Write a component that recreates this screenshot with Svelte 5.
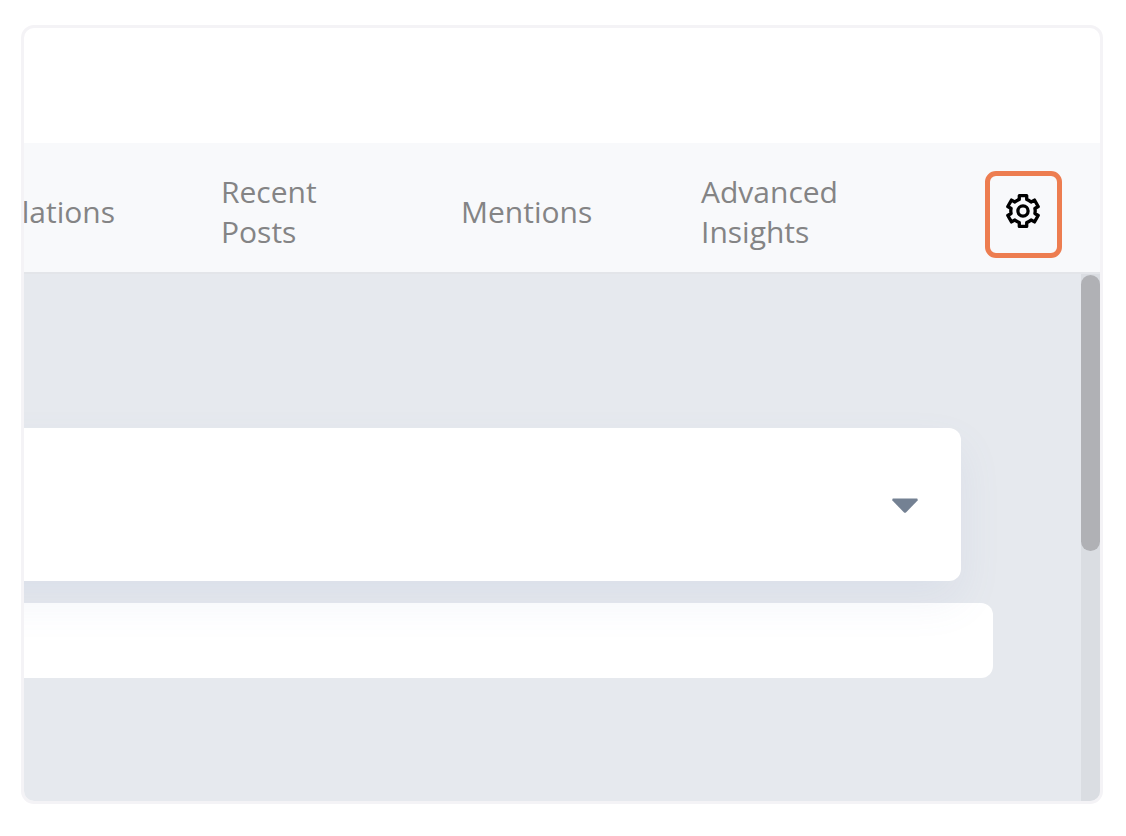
<script lang="ts">
	const tabs = ['lations', 'Recent Posts', 'Mentions', 'Advanced Insights'];

	let scrollShare = $state(52.4);
</script>

<div class="panel">
	<header class="topbar"></header>

	<nav class="tabs">
		{#each tabs as tab, i}
			<a href="#tab-{i}" class="tab" class:tab-cut={i === 0}>{tab}</a>
		{/each}
		<button class="settings" aria-label="Settings">
			<svg width="36" height="36" viewBox="-18 -18 36 36" fill="none" aria-hidden="true">
				<path
					d="M-3.7-11.6V-15.4H3.7V-11.6Q6-10.8 8.1-9L11.5-10.9L15.2-4.5L11.9-2.5Q12.5 0 11.9 2.5L15.2 4.5L11.5 10.9L8.1 9Q6 10.8 3.7 11.6V15.4H-3.7V11.6Q-6 10.8-8.1 9L-11.5 10.9L-15.2 4.5L-11.9 2.5Q-12.5 0-11.9-2.5L-15.2-4.5L-11.5-10.9L-8.1-9Q-6-10.8-3.7-11.6Z"
					stroke="#000"
					stroke-width="3.3"
					stroke-linejoin="round"
				/>
				<circle r="5.1" stroke="#000" stroke-width="3.3" />
			</svg>
		</button>
	</nav>

	<div class="body">
		<main class="content">
			<button class="card dropdown" aria-label="Expand">
				<svg width="26" height="16" viewBox="0 0 26 16" aria-hidden="true">
					<path d="M1.2 0.5H24.8Q26 0.5 25.6 2.6L14.2 14.2Q13 15.4 11.8 14.2L0.4 2.6Q0 0.5 1.2 0.5Z" fill="#748193" />
				</svg>
			</button>
			<div class="card row"></div>
		</main>
		<div class="scroll-track">
			<div class="scroll-thumb" style="height: {scrollShare}%"></div>
		</div>
	</div>
</div>

<style>
	:global(body) {
		margin: 0;
		background: #fff;
	}
	.panel {
		margin: 25px 23px 32px 21px;
		border: 3px solid #f4f3f6;
		border-radius: 13px;
		overflow: hidden;
		background: #fff;
		font-family: 'Open Sans', 'Noto Sans', sans-serif;
	}
	.topbar {
		height: 115px;
	}
	.tabs {
		display: flex;
		align-items: center;
		justify-content: flex-end;
		box-sizing: border-box;
		height: 131px;
		padding: 14px 38px 0 0;
		background: #f8f9fb;
		border-bottom: 2px solid #e3e5e9;
	}
	.tab {
		flex: none;
		box-sizing: border-box;
		width: 240px;
		padding: 0 53px 6px;
		font-size: 30px;
		line-height: 40px;
		color: #848485;
		text-decoration: none;
	}
	.tab-cut {
		text-align: right;
	}
	.settings {
		flex: none;
		box-sizing: border-box;
		width: 77px;
		height: 87px;
		margin-left: 97px;
		padding: 0 1px 7px 0;
		border: 5px solid #ed7d50;
		border-radius: 11px;
		background: #f8f9fb;
		cursor: pointer;
	}
	.settings svg {
		display: block;
		margin: 0 auto;
	}
	.body {
		display: flex;
		background: #e6e9ee;
	}
	.content {
		flex: 1;
		display: flex;
		flex-direction: column;
		gap: 22px;
		padding: 154px 88px 123px 0;
		overflow: hidden;
	}
	.card {
		background: #fff;
		border-radius: 0 12px 12px 0;
	}
	.dropdown {
		position: relative;
		display: flex;
		align-items: center;
		justify-content: flex-end;
		height: 153px;
		margin: 0 32px 0 -60px;
		padding: 2px 43px 0;
		border: none;
		box-shadow: 0 20px 44px rgba(110, 135, 185, 0.09);
		cursor: pointer;
	}
	.row {
		height: 75px;
	}
	.scroll-track {
		width: 19px;
		padding-top: 1px;
		background: #dadde2;
	}
	.scroll-thumb {
		border-radius: 10px;
		background: #b0b1b5;
	}
</style>
